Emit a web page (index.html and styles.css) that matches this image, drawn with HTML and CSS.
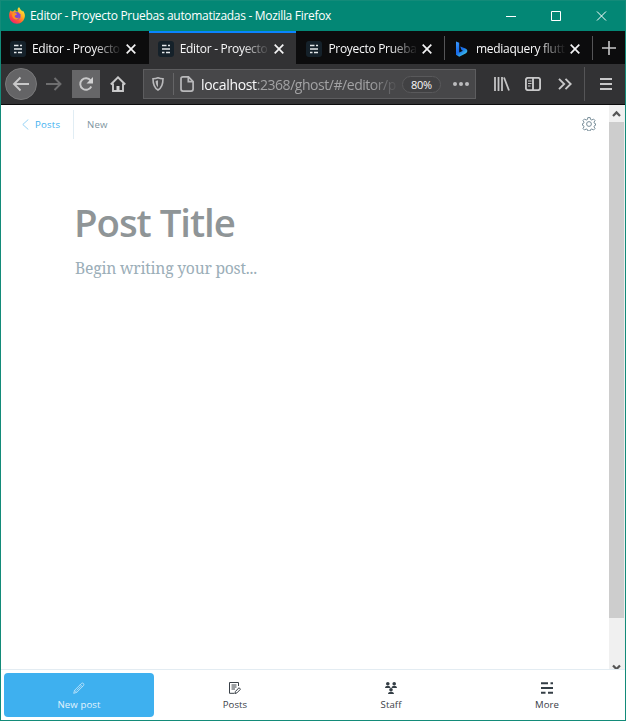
FILE: index.html
```html
<!DOCTYPE html>
<html lang="en">
<head>
<meta charset="utf-8">
<title>Editor - Proyecto Pruebas automatizadas</title>
<link rel="stylesheet" href="styles.css">
</head>
<body>
<svg class="defs" width="0" height="0">
  <symbol id="ghost" viewBox="0 0 16 16"><rect width="16" height="16" rx="3" fill="#15212a"/><path d="M4 4.500h4.500M10 4.500h2M4 8h8M4 11.500h2.500M8 11.500h4" stroke="#e4e8ea" stroke-width="1.700"/></symbol>
  <symbol id="close" viewBox="0 0 10 10"><path d="M.7.7l8.600 8.600M9.300.7L.7 9.300" stroke="#f4f4f5" stroke-width="1.700"/></symbol>
</svg>
<div class="window">
  <header class="titlebar">
    <svg class="firefox" width="16" height="17" viewBox="0 0 16 17">
      <defs>
        <linearGradient id="flame" x1=".9" y1=".05" x2=".2" y2="1"><stop offset="0" stop-color="#fff044"/><stop offset=".4" stop-color="#ffad20"/><stop offset=".7" stop-color="#ff5535"/><stop offset="1" stop-color="#e8197b"/></linearGradient>
      </defs>
      <path d="M1.500 3.200L3 4.500l1.600-.3L6.300 2.500l.3 1.700L9 4.500 8.500 2 10 0l1.500 2.500 2 2 .3-1C15.500 5.500 16 7.500 15.900 9c-.3 4.500-3.700 7.700-7.900 7.700S.2 13.500.1 9C0 6.500.7 4.700 1.500 3.200z" fill="url(#flame)"/>
      <path d="M5.500 5.500L9 5l2.500 2.500v3L9 12.700l-3-.7-1.500-2.500z" fill="#8148d2"/>
      <path d="M3.500 6.500l3-.5 1.700 1.200-2.200 1.300-.3 1.500 2.300 1.200 2-.8c-1 2.500-3.500 2.600-5 1.300C3 10 2.700 8 3.500 6.500z" fill="#ff9220"/>
    </svg>
    <span class="window-title">Editor - Proyecto Pruebas automatizadas - Mozilla Firefox</span>
    <svg class="controls" width="104" height="12" viewBox="0 0 104 12" fill="none" stroke="#fff"><path d="M1 6.500h10"/><path d="M46.500 1.500h9v9h-9z"/><path d="M92 1.500l9 9M101 1.500l-9 9"/></svg>
  </header>

  <nav class="tabs">
    <div class="tab"><svg class="favicon"><use href="#ghost"/></svg><span class="tab-label">Editor - Proyecto</span><svg class="close"><use href="#close"/></svg></div>
    <div class="tab active"><svg class="favicon"><use href="#ghost"/></svg><span class="tab-label">Editor - Proyecto</span><svg class="close"><use href="#close"/></svg></div>
    <div class="tab shifted"><svg class="favicon"><use href="#ghost"/></svg><span class="tab-label">Proyecto Prueba</span><svg class="close"><use href="#close"/></svg></div>
    <div class="tab shifted divided"><svg class="favicon" viewBox="0 0 16 16"><defs><linearGradient id="bing" x1="0" y1="0" x2=".6" y2="1"><stop offset="0" stop-color="#3c9cff"/><stop offset=".6" stop-color="#1769ea"/><stop offset="1" stop-color="#41c9e8"/></linearGradient></defs><path d="M2 .5l3.200 1.200v9.800L9 9.700 7.500 8.900 6.200 5.500l5.300 2c2.300 1 2.500 3.500.5 4.700L5.200 15.800l-3.200-2z" fill="url(#bing)"/></svg><span class="tab-label">mediaquery flutt</span><svg class="close"><use href="#close"/></svg></div>
    <div class="new-tab"><svg width="14" height="14" viewBox="0 0 14 14"><path d="M7 0v14M0 7h14" stroke="#c8c8c9" stroke-width="1.600"/></svg></div>
  </nav>

  <div class="toolbar">
    <div class="back"><svg width="18" height="16" viewBox="0 0 18 16"><path d="M17 8H2M8.500 1.500L2 8l6.500 6.500" class="line"/></svg></div>
    <svg class="forward" width="16" height="14" viewBox="0 0 16 14"><path d="M0 7h14.500M8.500 1l6 6-6 6" class="line"/></svg>
    <div class="reload"><svg width="16" height="16" viewBox="0 0 16 16"><path d="M13.300 10.500A5.800 5.800 0 1 1 12.700 4.500" class="line"/><path d="M15 1v6.500H8.500z" fill="#d2d2d3"/></svg></div>
    <svg class="home" width="16" height="16" viewBox="0 0 16 16"><path d="M.8 8.500L8 1.300l7.200 7.200M3 7.500V15h10V7.500M8 15v-3.500" class="line"/><path d="M6.500 10h3v5h-3z" fill="#d2d2d3"/></svg>
    <div class="address">
      <svg class="shield" width="12" height="14" viewBox="0 0 12 14"><path d="M6 .8c1.500.7 3.200 1 5 1 0 4.700-.8 9-5 11.200C1.800 10.800 1 6.500 1 1.800 2.800 1.800 4.500 1.500 6 .8z" fill="none" stroke="#b9b9bb" stroke-width="1.600"/><path d="M6 3.300v7C4.300 8.800 3.700 6.500 3.600 4z" fill="#b9b9bb"/></svg>
      <span class="address-divider"></span>
      <svg class="page" width="14" height="16" viewBox="0 0 14 16"><path d="M3 .9h5.500l4.600 4.600v7.600a2 2 0 0 1-2 2H3a2 2 0 0 1-2-2V2.900a2 2 0 0 1 2-2zM8.300 1v4.700H13" fill="none" stroke="#b9b9bb" stroke-width="1.700"/></svg>
      <span class="url"><b>localhost</b>:2368/ghost/#/editor/p</span>
      <span class="zoom">80%</span>
      <svg class="dots" width="16" height="4" viewBox="0 0 16 4" fill="#bcbcbe"><circle cx="2" cy="2" r="2"/><circle cx="8" cy="2" r="2"/><circle cx="14" cy="2" r="2"/></svg>
    </div>
    <svg class="library" width="16" height="14" viewBox="0 0 16 14"><path d="M1 0v14M4.500 0v14M8 0v14M10 .5l5 13" stroke="#c4c4c5" stroke-width="1.800"/></svg>
    <svg class="sidebar" width="16" height="14" viewBox="0 0 16 14"><rect x=".9" y=".9" width="14.200" height="12.200" rx="2" class="line"/><path d="M8 1v12" class="line"/><path d="M3 4h3.500M3 6.500h3.500M3 9h2.500" stroke="#c4c4c5"/></svg>
    <svg class="overflow" width="14" height="12" viewBox="0 0 14 12"><path d="M1 .8L6.200 6 1 11.200M7.500.8L12.700 6l-5.200 5.200" class="line"/></svg>
    <span class="toolbar-divider"></span>
    <svg class="menu" width="12" height="12" viewBox="0 0 12 12"><path d="M0 1h12M0 6h12M0 11h12" class="line"/></svg>
  </div>

  <div class="viewport">
    <main class="editor">
      <div class="editor-header">
        <a class="crumb"><svg width="7" height="11" viewBox="0 0 7 11"><path d="M6.300.5l-5.500 5 5.500 5" fill="none" stroke="#7cc8f4" stroke-width=".8"/></svg>Posts</a>
        <span class="status">New</span>
        <svg class="gear" width="14" height="14" viewBox="0 0 14 14" fill="none" stroke="#718794" stroke-width=".95"><circle cx="7" cy="7" r="2.400"/><path d="M5.800.6h2.400l.4 1.900 1.200.5 1.700-1 1.500 1.500-1 1.700.5 1.200 1 .3v1.600l-1 .3-.5 1.200 1 1.700-1.500 1.500-1.700-1-1.200.5-.4 1.400H5.800l-.4-1.400-1.200-.5-1.700 1L1 11.500l1-1.700-.5-1.200-1-.3V6.700l1-.3L2 5.200 1 3.500 2.500 2l1.700 1 1.200-.5z"/></svg>
      </div>
      <h1 class="post-title">Post Title</h1>
      <p class="post-body">Begin writing your post...</p>
    </main>
    <div class="scrollbar">
      <svg width="15" height="17" viewBox="0 0 15 17"><path d="M4 11l3.500-3.600L11 11" fill="none" stroke="#555" stroke-width="2.200"/></svg>
      <div class="thumb"></div>
      <svg class="down" width="15" height="5" viewBox="0 0 15 5"><path d="M4 1.500l3.500 3.600L11 1.500" fill="none" stroke="#555" stroke-width="2.200"/></svg>
    </div>
  </div>

  <nav class="bottom-nav">
    <a class="nav-item primary"><svg width="12" height="12" viewBox="0 0 12 12" fill="none" stroke="#cdeafb" stroke-width=".8"><path d="M.7 11.300l.9-3L8.300 1.600c1.500-1.500 3.500.5 2.100 2.100L3.700 10.400zM7.300 2.600l2.100 2.100M1.600 8.300l2.100 2.100M3.600 8.500l4.200-4.200"/></svg>New post</a>
    <a class="nav-item"><svg width="12" height="12" viewBox="0 0 12 12" fill="none" stroke="#394047" stroke-width="1"><path d="M9.500 4V.5h-9v10.800h5M2.500 3h5M2.500 5h5M2.500 7h3.500"/><path d="M6 11.500l.4-2L10 5.700l1.500 1.500-3.600 3.700z"/></svg>Posts</a>
    <a class="nav-item"><svg width="12" height="12" viewBox="0 0 12 12" fill="#343e45"><circle cx="2.800" cy="1.800" r="1.800"/><circle cx="9.200" cy="1.800" r="1.800"/><circle cx="6" cy="7.700" r="1.800"/><path d="M0 6c0-3 5.500-3 5.500 0zM6.500 6c0-3 5.500-3 5.500 0zM3 12c0-3 6-3 6 0z"/></svg>Staff</a>
    <a class="nav-item"><svg width="12" height="12" viewBox="0 0 12 12"><path d="M0 1.200h7M9.500 1.200H12M0 6h12M0 10.800h4.500M7 10.800h5" stroke="#343e45" stroke-width="2.100"/></svg>More</a>
  </nav>
</div>
</body>
</html>
```
FILE: styles.css
```css
* { box-sizing: border-box; }
body { margin: 0; font-family: "Open Sans", "Noto Sans", sans-serif; }
svg { display: block; flex: none; }
.defs { position: absolute; }
.line { fill: none; stroke: #c8c8c9; stroke-width: 1.900; }

.window {
  width: 626px;
  height: 721px;
  display: flex;
  flex-direction: column;
  border: solid #138b79;
  border-width: 0 1px 1px;
  overflow: hidden;
  background: #fff;
}

.titlebar {
  height: 31px;
  flex: none;
  display: flex;
  align-items: center;
  padding: 0 16px 1px 8px;
  background: #038775;
  border-top: 1px solid #138b79;
  color: #fff;
}
.window-title { margin-left: 5px; font-size: 12px; letter-spacing: -.31px; white-space: nowrap; }
.controls { margin-left: auto; }

.tabs { height: 33px; flex: none; display: flex; background: #0c0c0d; }
.tab {
  width: 147.700px;
  flex: none;
  display: flex;
  align-items: center;
  padding: 2px 12px 0 9px;
  color: #f9f9fa;
  font-size: 12px;
}
.tab.shifted { padding-left: 10px; }
.tab.active { background: #323234; border-top: 2px solid #0a84ff; padding-top: 0; }
.favicon { width: 16px; height: 16px; }
.tab-label {
  width: 90px;
  margin-left: 6px;
  white-space: nowrap;
  letter-spacing: -.3px;
  mask-image: linear-gradient(to right, #000 62px, transparent 90px);
}
.close { width: 10px; height: 10px; margin-left: 4px; }
.divided, .new-tab {
  background: linear-gradient(#555557, #555557) 0 5px / 1px 24px no-repeat;
}
.new-tab { flex: 1; display: flex; align-items: center; padding-left: 10px; }

.toolbar {
  height: 41px;
  flex: none;
  display: flex;
  align-items: center;
  padding-left: 4px;
  background: #323234;
  border-bottom: 1px solid #0c0c0d;
}
.back {
  width: 32px;
  height: 32px;
  display: grid;
  place-items: center;
  border: 1px solid #79797a;
  border-radius: 50%;
  background: #646466;
}
.forward { margin-left: 9px; opacity: .4; }
.reload { width: 28px; height: 28px; margin-left: 10px; display: grid; place-items: center; background: #666668; }
.home { margin-left: 10px; }
.address {
  width: 333px;
  height: 30px;
  margin-left: 17px;
  display: flex;
  align-items: center;
  padding-left: 8px;
  background: #474749;
  border: 1px solid #5d5d5f;
}
.address-divider { width: 1px; height: 22px; margin: 0 6px 0 9px; background: #656567; }
.url {
  width: 198px;
  margin-left: 7px;
  color: #a2a2a4;
  font-size: 14px;
  letter-spacing: -.46px;
  white-space: nowrap;
  mask-image: linear-gradient(to right, #000 170px, transparent 198px);
}
.url b { color: #f9f9fa; font-weight: 400; letter-spacing: -.32px; }
.zoom {
  width: 39px;
  height: 17px;
  margin-left: 3px;
  border: 1px solid #59595b;
  border-radius: 9px;
  background: #414143;
  color: #f9f9fa;
  font-size: 11px;
  line-height: 15px;
  letter-spacing: -.3px;
  text-align: center;
}
.dots { margin-left: 12px; }
.library { margin-left: 18px; }
.sidebar { margin-left: 15px; }
.overflow { margin-left: 17px; }
.toolbar-divider { width: 1px; height: 34px; margin-left: 12px; background: #555557; }
.menu { margin-left: 15px; }

.viewport { flex: 1; min-height: 0; display: flex; }
.editor { flex: 1; }
.editor-header {
  height: 39px;
  display: flex;
  align-items: center;
  padding: 5px 13px 5px 21px;
  font-size: 9.600px;
  letter-spacing: .25px;
}
.crumb {
  width: 52px;
  height: 29px;
  display: flex;
  align-items: center;
  gap: 6px;
  border-right: 1px solid #e1edf4;
  color: #3eb0ef;
}
.status { margin-left: 13px; color: #8095a1; }
.gear { margin: 0 0 1px auto; }
.post-title {
  margin: 52px 0 0 73px;
  color: #8f9597;
  font-size: 38.400px;
  font-weight: 600;
  line-height: 52px;
  letter-spacing: -1.050px;
}
.post-body {
  margin: 8px 0 0 74px;
  color: #9baeb8;
  font-family: "Noto Serif", Georgia, "Liberation Serif", serif;
  font-size: 15.700px;
  line-height: 24px;
  letter-spacing: -.23px;
}
.scrollbar { width: 16px; display: flex; flex-direction: column; background: #f0f0f0; padding-right: 1px; }
.thumb { height: 496px; background: #cdcdcd; }
.down { margin-top: auto; }

.bottom-nav { height: 51px; flex: none; display: flex; border-top: 1px solid #e3ecf2; }
.nav-item {
  flex: 1;
  margin: 3px;
  display: flex;
  flex-direction: column;
  align-items: center;
  padding-top: 9px;
  gap: 4px;
  border-radius: 4px;
  color: #394047;
  font-size: 9.600px;
  line-height: 14px;
  letter-spacing: .1px;
}
.primary { background: #3eb0ef; color: #e1f3fd; }
```
